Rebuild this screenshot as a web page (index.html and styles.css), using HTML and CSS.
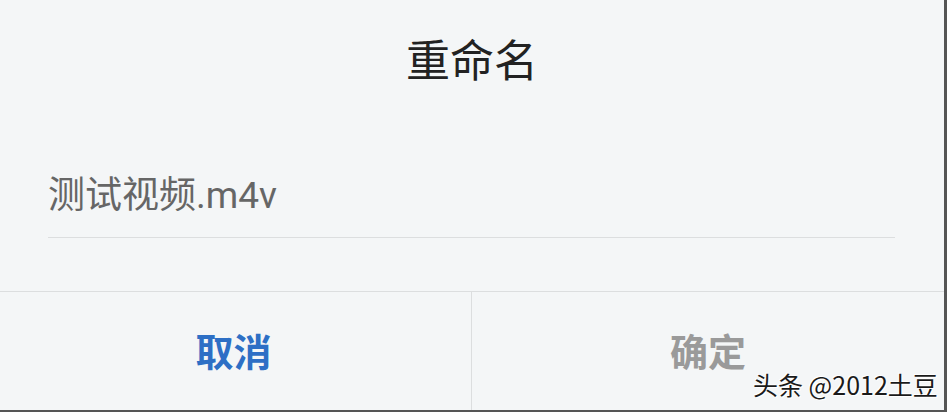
FILE: index.html
```html
<!DOCTYPE html>
<html lang="zh-CN">
<head>
<meta charset="utf-8">
<title>重命名</title>
<link rel="stylesheet" href="styles.css">
</head>
<body>
<div class="frame">
  <div class="title">重命名</div>
  <div class="field">测试视频.m4v</div>
  <div class="actions">
    <div class="btn cancel">取消</div>
    <div class="btn ok">确定</div>
  </div>
  <div class="watermark">头条 @2012土豆</div>
</div>
</body>
</html>
```

FILE: styles.css
```css
html, body {
  margin: 0;
  padding: 0;
  background: #f4f6f7;
}
.frame {
  position: relative;
  width: 947px;
  height: 412px;
  box-sizing: border-box;
  border-right: 3px solid #555;
  border-bottom: 2px solid #555;
  background: #f4f6f7;
  font-family: "Noto Sans CJK SC", "Noto Sans", sans-serif;
  display: flex;
  flex-direction: column;
}
.title {
  height: 125px;
  box-sizing: border-box;
  padding: 0 0 10px 0;
  display: flex;
  align-items: center;
  justify-content: center;
  font-size: 44px;
  color: #222;
}
.field {
  margin: 0 49px 53px 48px;
  padding: 47px 0 17px;
  height: 48px;
  line-height: 48px;
  font-family: "Roboto", "Noto Sans CJK SC", sans-serif;
  font-size: 37px;
  color: #666;
  border-bottom: 1px solid #dcdedf;
}
.actions {
  flex: 1;
  display: flex;
  border-top: 1px solid #dcdedf;
}
.btn {
  display: flex;
  align-items: center;
  justify-content: center;
  font-size: 38px;
  font-weight: bold;
  padding-bottom: 4px;
  box-sizing: border-box;
}
.cancel {
  width: 472px;
  border-right: 1px solid #dcdedf;
  color: #2d6fc5;
  padding-right: 4px;
}
.ok {
  flex: 1;
  color: #9a9a9a;
}
.watermark {
  position: absolute;
  left: 753px;
  top: 366px;
  font-size: 25px;
  color: #1a1a1a;
  text-shadow: 1px 1px 0 #fff, -1px -1px 0 #fff;
}
```
